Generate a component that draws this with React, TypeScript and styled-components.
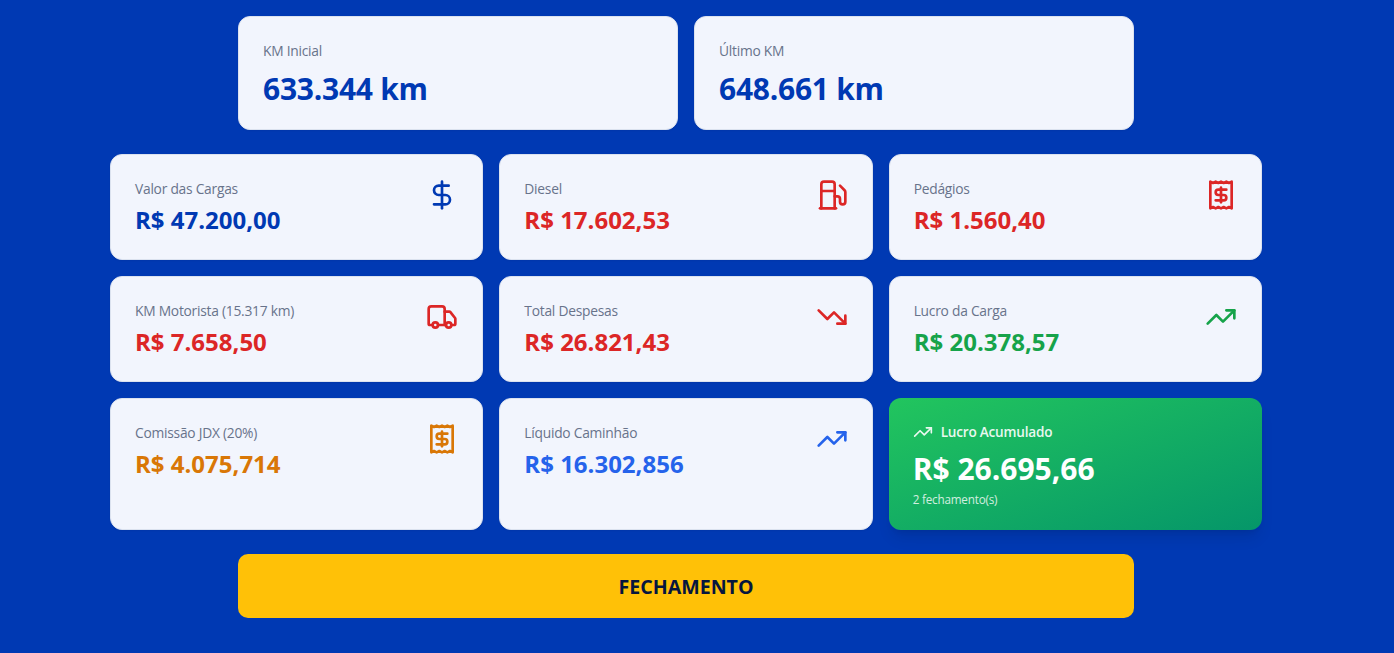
import type { ReactNode } from 'react';
import styled, { createGlobalStyle } from 'styled-components';
import { DollarSign, TrendingDown, TrendingUp, Truck } from 'lucide-react';

const colors = {
  brand: '#0039b3',
  card: '#f2f5fd',
  border: '#dbe2ef',
  muted: '#68738b',
  red: '#dc2626',
  green: '#16a34a',
  amber: '#d97706',
  blue: '#2563eb',
  yellow: '#ffc107',
  navy: '#06163f',
};

const FuelIcon = () => (
  <StrokeIcon viewBox="0 0 24 24">
    <path d="M3 22h12" />
    <path d="M4 9h10" />
    <path d="M14 22V4a2 2 0 0 0-2-2H6a2 2 0 0 0-2 2v18" />
    <path d="M14 13h2a2 2 0 0 1 2 2v2a2 2 0 0 0 4 0V9.83a2 2 0 0 0-.59-1.42L18 5" />
  </StrokeIcon>
);

const ReceiptIcon = () => (
  <StrokeIcon viewBox="0 0 24 24">
    <path d="M4 2v20l2-1 2 1 2-1 2 1 2-1 2 1 2-1 2 1V2l-2 1-2-1-2 1-2-1-2 1-2-1-2 1Z" />
    <path d="M16 8h-6a2 2 0 1 0 0 4h4a2 2 0 1 1 0 4H8" />
    <path d="M12 17.5v-11" />
  </StrokeIcon>
);

interface Stat {
  label: string;
  value: string;
  color: string;
  icon: ReactNode;
}

const kms = [
  { label: 'KM Inicial', value: '633.344 km' },
  { label: 'Último KM', value: '648.661 km' },
];

const stats: Stat[] = [
  { label: 'Valor das Cargas', value: 'R$ 47.200,00', color: colors.brand, icon: <DollarSign size={32} /> },
  { label: 'Diesel', value: 'R$ 17.602,53', color: colors.red, icon: <FuelIcon /> },
  { label: 'Pedágios', value: 'R$ 1.560,40', color: colors.red, icon: <ReceiptIcon /> },
  { label: 'KM Motorista (15.317 km)', value: 'R$ 7.658,50', color: colors.red, icon: <Truck size={32} /> },
  { label: 'Total Despesas', value: 'R$ 26.821,43', color: colors.red, icon: <TrendingDown size={32} /> },
  { label: 'Lucro da Carga', value: 'R$ 20.378,57', color: colors.green, icon: <TrendingUp size={32} /> },
  { label: 'Comissão JDX (20%)', value: 'R$ 4.075,714', color: colors.amber, icon: <ReceiptIcon /> },
  { label: 'Líquido Caminhão', value: 'R$ 16.302,856', color: colors.blue, icon: <TrendingUp size={32} /> },
];

const App = () => {
  return (
    <>
      <GlobalStyle />
      <Page>
        <KmGrid>
          {kms.map(({ label, value }) => (
            <Card key={label}>
              <Label>{label}</Label>
              <KmValue>{value}</KmValue>
            </Card>
          ))}
        </KmGrid>
        <StatGrid>
          {stats.map(({ label, value, color, icon }) => (
            <StatCard key={label} $color={color}>
              <div>
                <Label>{label}</Label>
                <StatValue>{value}</StatValue>
              </div>
              {icon}
            </StatCard>
          ))}
          <ProfitCard>
            <ProfitHeader>
              <TrendingUp size={20} />
              <ProfitTitle>Lucro Acumulado</ProfitTitle>
            </ProfitHeader>
            <ProfitValue>R$ 26.695,66</ProfitValue>
            <ProfitNote>2 fechamento(s)</ProfitNote>
          </ProfitCard>
        </StatGrid>
        <CloseButton type="button">FECHAMENTO</CloseButton>
      </Page>
    </>
  );
};

export default App;

const GlobalStyle = createGlobalStyle`
  * {
    box-sizing: border-box;
    margin: 0;
  }

  body {
    background: ${colors.brand};
    font-family: 'Segoe UI', 'Open Sans', 'Noto Sans', sans-serif;
    overflow: hidden;
  }
`;

const StrokeIcon = styled.svg`
  width: 32px;
  height: 32px;
  fill: none;
  stroke: currentColor;
  stroke-width: 2;
  stroke-linecap: round;
  stroke-linejoin: round;
`;

const Page = styled.main`
  display: flex;
  flex-direction: column;
  align-items: center;
  gap: 24px;
  width: 1372px;
  min-height: 100vh;
  padding: 16px 0 35px;
`;

const KmGrid = styled.section`
  display: grid;
  grid-template-columns: repeat(2, 1fr);
  gap: 16px;
  width: 896px;
`;

const StatGrid = styled.section`
  display: grid;
  grid-template-columns: repeat(3, 1fr);
  gap: 16px;
  width: 1152px;
`;

const Card = styled.article`
  padding: 24px;
  border: 1px solid ${colors.border};
  border-radius: 12px;
  background: ${colors.card};
  box-shadow: 0 1px 2px rgba(0, 0, 0, 0.05);
`;

const StatCard = styled(Card)<{ $color: string }>`
  display: flex;
  align-items: flex-start;
  justify-content: space-between;
  color: ${({ $color }) => $color};
`;

const Label = styled.p`
  color: ${colors.muted};
  font-size: 13.8px;
  line-height: 20px;
  letter-spacing: -0.25px;
`;

const KmValue = styled.p`
  margin-top: 11px;
  color: ${colors.brand};
  font-size: 30px;
  font-weight: 700;
  line-height: 33px;
  letter-spacing: -0.25px;
`;

const StatValue = styled.p`
  margin-top: 6px;
  font-size: 24px;
  font-weight: 700;
  line-height: 30px;
`;

const ProfitCard = styled.article`
  padding: 24px;
  border-radius: 12px;
  background: linear-gradient(to bottom right, #22c55e, #059669);
  box-shadow:
    0 10px 15px -3px rgba(0, 0, 0, 0.1),
    0 4px 6px -4px rgba(0, 0, 0, 0.1);
  color: #fff;
`;

const ProfitHeader = styled.div`
  display: flex;
  align-items: center;
  gap: 8px;
  margin-bottom: 10px;
  opacity: 0.9;
`;

const ProfitTitle = styled.p`
  font-size: 13.6px;
  font-weight: 600;
  line-height: 20px;
  letter-spacing: -0.22px;
`;

const ProfitValue = styled.p`
  font-size: 30px;
  font-weight: 700;
  line-height: 34px;
`;

const ProfitNote = styled.p`
  margin-top: 6px;
  font-size: 11.7px;
  line-height: 14px;
  letter-spacing: -0.2px;
  opacity: 0.8;
`;

const CloseButton = styled.button`
  width: 896px;
  height: 64px;
  padding: 2px 0 0;
  border: none;
  border-radius: 10px;
  background: ${colors.yellow};
  color: ${colors.navy};
  font-family: inherit;
  font-size: 19.6px;
  font-weight: 700;
  line-height: 28px;
`;
